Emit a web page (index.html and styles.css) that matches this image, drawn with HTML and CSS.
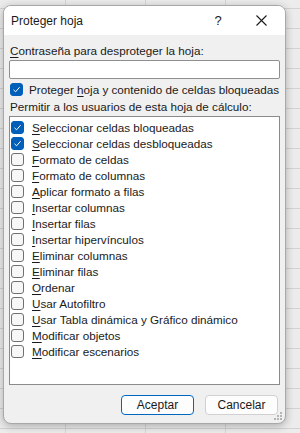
FILE: index.html
```html
<!DOCTYPE html>
<html lang="es">
<head>
    <meta charset="UTF-8">
    <meta name="viewport" content="width=device-width, initial-scale=1.0">
    <title>Proteger hoja</title>
    <link rel="stylesheet" href="styles.css">
</head>
<body>
    <div class="dialog">
        <div class="titlebar">
            <span class="title">Proteger hoja</span>
            <span class="help">?</span>
            <span class="close">
                <svg width="11" height="11" viewBox="0 0 11 11"><path d="M0.5 0.5 L10.5 10.5 M10.5 0.5 L0.5 10.5" stroke="#1a1a1a" stroke-width="1.1"/></svg>
            </span>
        </div>

        <div class="content">
            <div class="field-label"><u>C</u>ontraseña para desproteger la hoja:</div>
            <div class="password"></div>

            <div class="protect-row">
                <span class="box checked">
                    <svg width="9" height="9" viewBox="0 0 9 9"><path d="M1.5 4.8 L3.6 6.8 L7.6 2.2" fill="none" stroke="#fff" stroke-width="1"/></svg>
                </span>
                <span>Proteger <u>h</u>oja y contenido de celdas bloqueadas</span>
            </div>

            <div class="list-label">Permitir a los usuarios de esta hoja de cálculo:</div>

            <ul class="perm-list">
                <li><span class="box checked"><svg width="9" height="9" viewBox="0 0 9 9"><path d="M1.5 4.8 L3.6 6.8 L7.6 2.2" fill="none" stroke="#fff" stroke-width="1"/></svg></span><span><u>S</u>eleccionar celdas bloqueadas</span></li>
                <li><span class="box checked"><svg width="9" height="9" viewBox="0 0 9 9"><path d="M1.5 4.8 L3.6 6.8 L7.6 2.2" fill="none" stroke="#fff" stroke-width="1"/></svg></span><span><u>S</u>eleccionar celdas desbloqueadas</span></li>
                <li><span class="box"></span><span><u>F</u>ormato de celdas</span></li>
                <li><span class="box"></span><span><u>F</u>ormato de columnas</span></li>
                <li><span class="box"></span><span><u>A</u>plicar formato a filas</span></li>
                <li><span class="box"></span><span><u>I</u>nsertar columnas</span></li>
                <li><span class="box"></span><span><u>I</u>nsertar filas</span></li>
                <li><span class="box"></span><span><u>I</u>nsertar hipervínculos</span></li>
                <li><span class="box"></span><span><u>E</u>liminar columnas</span></li>
                <li><span class="box"></span><span><u>E</u>liminar filas</span></li>
                <li><span class="box"></span><span><u>O</u>rdenar</span></li>
                <li><span class="box"></span><span><u>U</u>sar Autofiltro</span></li>
                <li><span class="box"></span><span><u>U</u>sar Tabla dinámica y Gráfico dinámico</span></li>
                <li><span class="box"></span><span><u>M</u>odificar objetos</span></li>
                <li><span class="box"></span><span><u>M</u>odificar escenarios</span></li>
            </ul>

            <div class="buttons">
                <button class="btn default">Aceptar</button>
                <button class="btn">Cancelar</button>
            </div>
        </div>

        <svg class="grip" width="9" height="9" viewBox="0 0 9 9">
            <rect x="6" y="0" width="2" height="2" fill="#b4b4b4"/>
            <rect x="3" y="3" width="2" height="2" fill="#b4b4b4"/>
            <rect x="6" y="3" width="2" height="2" fill="#b4b4b4"/>
            <rect x="0" y="6" width="2" height="2" fill="#b4b4b4"/>
            <rect x="3" y="6" width="2" height="2" fill="#b4b4b4"/>
            <rect x="6" y="6" width="2" height="2" fill="#b4b4b4"/>
        </svg>
    </div>
</body>
</html>
```

FILE: styles.css
```css
* {
    margin: 0;
    padding: 0;
    box-sizing: border-box;
}

body {
    font-family: "Liberation Sans", Arial, sans-serif;
    font-size: 11.7px;
    color: #1a1a1a;
    width: 300px;
    height: 433px;
    overflow: hidden;
    padding: 5px 0 0 3px;
    background-color: #ececec;
    background-image:
        linear-gradient(to bottom, transparent 19px, #d2d2d2 19px),
        linear-gradient(to right, transparent 79px, #d6d6d6 79px);
    background-size: 100% 20px, 80px 100%;
    background-position: 0 -11px, -14px 0;
}

.dialog {
    position: relative;
    width: 283px;
    height: 419px;
    background: #f0f0f0;
    border: 1px solid #a8a8a8;
    border-radius: 8px;
    box-shadow: 0 2px 8px rgba(0, 0, 0, 0.28);
    overflow: hidden;
}

.titlebar {
    height: 29px;
    background: #fff;
    display: flex;
    align-items: center;
    padding-left: 7px;
}

.title {
    font-size: 12px;
    flex: 1;
}

.help {
    font-size: 13px;
    width: 46px;
    text-align: center;
}

.close {
    width: 44px;
    display: flex;
    justify-content: center;
    padding-right: 3px;
}

.content {
    padding: 8px 6px 0 5px;
}

u {
    text-decoration-thickness: 1px;
    text-underline-offset: 2px;
}

.field-label {
    line-height: 16px;
    padding-left: 1px;
}

.password {
    margin-top: 1px;
    height: 19px;
    width: 271px;
    background: #fff;
    border: 1px solid #8f8f8f;
    border-radius: 2px;
}

.protect-row {
    display: flex;
    align-items: center;
    gap: 6px;
    margin-top: 4px;
    line-height: 13px;
    padding-left: 1px;
    white-space: nowrap;
}

.box {
    width: 13px;
    height: 13px;
    flex: none;
    border: 1px solid #707070;
    border-radius: 3px;
    background: #f7f7f7;
    display: flex;
    align-items: center;
    justify-content: center;
}

.box.checked {
    background: #005fb8;
    border-color: #005fb8;
}

.list-label {
    margin-top: 3px;
    line-height: 16px;
    padding-left: 1px;
}

.perm-list {
    list-style: none;
    margin-top: 1px;
    width: 271px;
    height: 269px;
    background: #fff;
    border: 1px solid #8a8a8a;
    padding: 2px 0 0 1px;
}

.perm-list li {
    display: flex;
    align-items: center;
    gap: 8px;
    height: 16px;
    white-space: nowrap;
}

.buttons {
    display: flex;
    justify-content: flex-end;
    gap: 11px;
    margin-top: 10px;
    padding-right: 1px;
}

.btn {
    font-family: inherit;
    font-size: 12px;
    color: #1a1a1a;
    width: 73px;
    height: 20px;
    background: #fdfdfd;
    border: 1px solid #d0d0d0;
    border-radius: 4px;
}

.btn.default {
    border-color: #0067c0;
}

.grip {
    position: absolute;
    right: 2px;
    bottom: 2px;
}
```
